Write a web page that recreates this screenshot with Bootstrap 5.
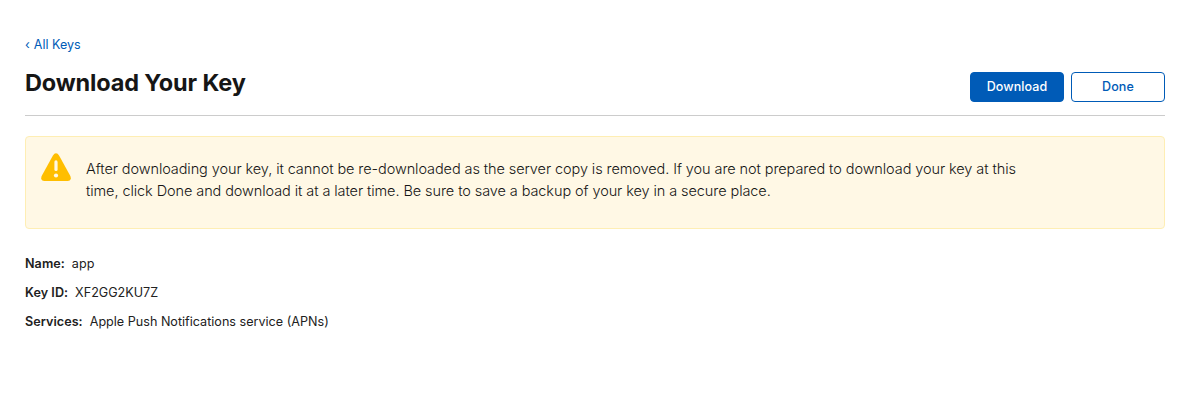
<!DOCTYPE html>
<html lang="en">
<head>
<meta charset="utf-8">
<meta name="viewport" content="width=device-width, initial-scale=1">
<title>Download Your Key</title>
<link href="https://cdn.jsdelivr.net/npm/bootstrap@5.3.0/dist/css/bootstrap.min.css" rel="stylesheet">
<style>
body{font-family:Inter,"Liberation Sans",sans-serif;font-size:13px;line-height:20px;color:#212121;background:#fff}
.page{padding:35px 22px 0 25px}
.back-link{color:#005bb7;line-height:20px;font-size:12.5px}
.back-link span{margin-right:4px}
.page-head{height:61px;border-bottom:1px solid #ccc}
.page-title{font-size:23.5px;line-height:30px;font-weight:700;margin-top:13px;color:#161616;letter-spacing:-.15px}
.page-head .btn{width:94px;height:30px;margin-top:17px;padding:0;font-size:12.5px;font-weight:500;line-height:28px;border-radius:4px;letter-spacing:.1px}
.btn-main{background:#005bb7;color:#fff;border-color:#005bb7}
.btn-plain{background:#fff;color:#005bb7;border-color:#005bb7}
.notice{height:93px;margin:20px 0 25px;padding:15px;background:#fff8e5;border:1px solid #feeeb4;border-radius:4px}
.notice-text{font-size:14.5px;line-height:22px;font-weight:300;margin:6px 0 0 15px;white-space:nowrap;letter-spacing:-.085px;color:#161616}
.details{font-size:12.6px}
.details dt{font-weight:600;letter-spacing:.05px}
.details dd{margin:0 0 0 7px}
</style>
</head>
<body>
<main class="page">
<a class="back-link d-block text-decoration-none" href="#"><span>‹</span>All Keys</a>
<header class="page-head d-flex justify-content-between">
<h1 class="page-title mb-0">Download Your Key</h1>
<div class="d-flex" style="gap:7px"><button class="btn btn-main">Download</button><button class="btn btn-plain">Done</button></div>
</header>
<div class="notice d-flex align-items-start" role="alert">
<svg width="30" height="30" viewBox="0 -.7 30 30" class="flex-shrink-0"><path fill="#ffbe00" d="M11.8 3Q15-1.8 18.2 3L29.2 23Q31.2 27.7 26.5 28.2H3.5Q-1.2 27.7.8 23Z"/><path d="M15 9.2v7.6" stroke="#fff8e5" stroke-width="3.2" stroke-linecap="round"/><ellipse cx="15" cy="22.8" rx="2.1" ry="1.9" fill="#fff8e5"/></svg>
<p class="notice-text">After downloading your key, it cannot be re-downloaded as the server copy is removed. If you are not prepared to download your key at this<br>time, click Done and download it at a later time. Be sure to save a backup of your key in a secure place.</p>
</div>
<dl class="details d-grid mb-0" style="gap:9px">
<div class="d-flex"><dt>Name:</dt><dd>app</dd></div>
<div class="d-flex"><dt>Key ID:</dt><dd>XF2GG2KU7Z</dd></div>
<div class="d-flex"><dt>Services:</dt><dd>Apple Push Notifications service (APNs)</dd></div>
</dl>
</main>
<script src="https://cdn.jsdelivr.net/npm/bootstrap@5.3.0/dist/js/bootstrap.bundle.min.js"></script>
</body>
</html>
